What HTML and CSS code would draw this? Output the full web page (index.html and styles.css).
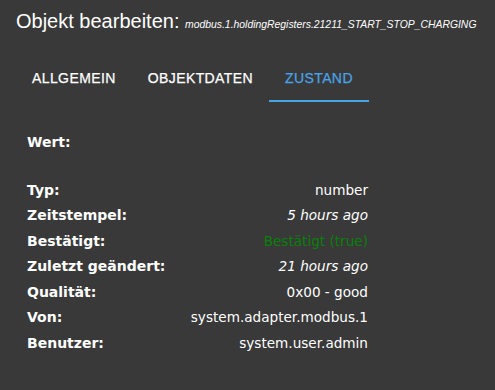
FILE: index.html
```html
<!DOCTYPE html>
<html lang="de">
<head>
<meta charset="utf-8">
<title>Objekt bearbeiten</title>
<link rel="stylesheet" href="styles.css">
</head>
<body>
<div class="dialog">
  <h1 class="title">Objekt bearbeiten: <span class="obj-id">modbus.1.holdingRegisters.21211_START_STOP_CHARGING</span></h1>
  <div class="tabs">
    <div class="tab">ALLGEMEIN</div>
    <div class="tab">OBJEKTDATEN</div>
    <div class="tab active">ZUSTAND</div>
  </div>
  <div class="state">
    <div class="row wert"><span class="label">Wert:</span><span class="value"></span></div>
    <div class="row"><span class="label">Typ:</span><span class="value">number</span></div>
    <div class="row"><span class="label">Zeitstempel:</span><span class="value italic">5 hours ago</span></div>
    <div class="row"><span class="label">Bestätigt:</span><span class="value ack">Bestätigt (true)</span></div>
    <div class="row"><span class="label">Zuletzt geändert:</span><span class="value italic">21 hours ago</span></div>
    <div class="row"><span class="label">Qualität:</span><span class="value">0x00 - good</span></div>
    <div class="row"><span class="label">Von:</span><span class="value">system.adapter.modbus.1</span></div>
    <div class="row"><span class="label">Benutzer:</span><span class="value">system.user.admin</span></div>
  </div>
</div>
</body>
</html>
```
FILE: styles.css
```css
html, body {
  margin: 0;
  padding: 0;
  background: #393939;
  height: 100%;
}

.dialog {
  color: #ffffff;
  font-family: "Liberation Sans", Arial, sans-serif;
}

.title {
  margin: 0;
  padding: 10px 0 0 16px;
  font-size: 20px;
  font-weight: normal;
  line-height: 23px;
  white-space: nowrap;
}

.obj-id {
  font-size: 10.4px;
  font-style: italic;
}

.tabs {
  display: flex;
  margin-top: 18px;
  padding-left: 16px;
  height: 48px;
}

.tab {
  display: flex;
  align-items: center;
  padding: 2px 16px 0;
  font-size: 14px;
  font-weight: normal;
  letter-spacing: 0.4px;
  color: #ffffff;
  box-sizing: border-box;
  border-bottom: 2px solid transparent;
  -webkit-text-stroke: 0.25px #ffffff;
}

.tab.active {
  color: #4aa3e6;
  border-bottom-color: #4aa3e6;
  -webkit-text-stroke: 0.25px #4aa3e6;
}

.state {
  margin: 27px 0 0 27px;
  width: 341px;
  font-family: "DejaVu Sans", Verdana, sans-serif;
}

.row {
  display: flex;
  justify-content: space-between;
  align-items: center;
  height: 25.5px;
}

.row.wert {
  margin-bottom: 22.5px;
}

.label {
  font-size: 14px;
  font-weight: bold;
}

.value {
  font-size: 13.6px;
  text-align: right;
}

.italic {
  font-style: italic;
}

.ack {
  color: #0a800a;
}
```
